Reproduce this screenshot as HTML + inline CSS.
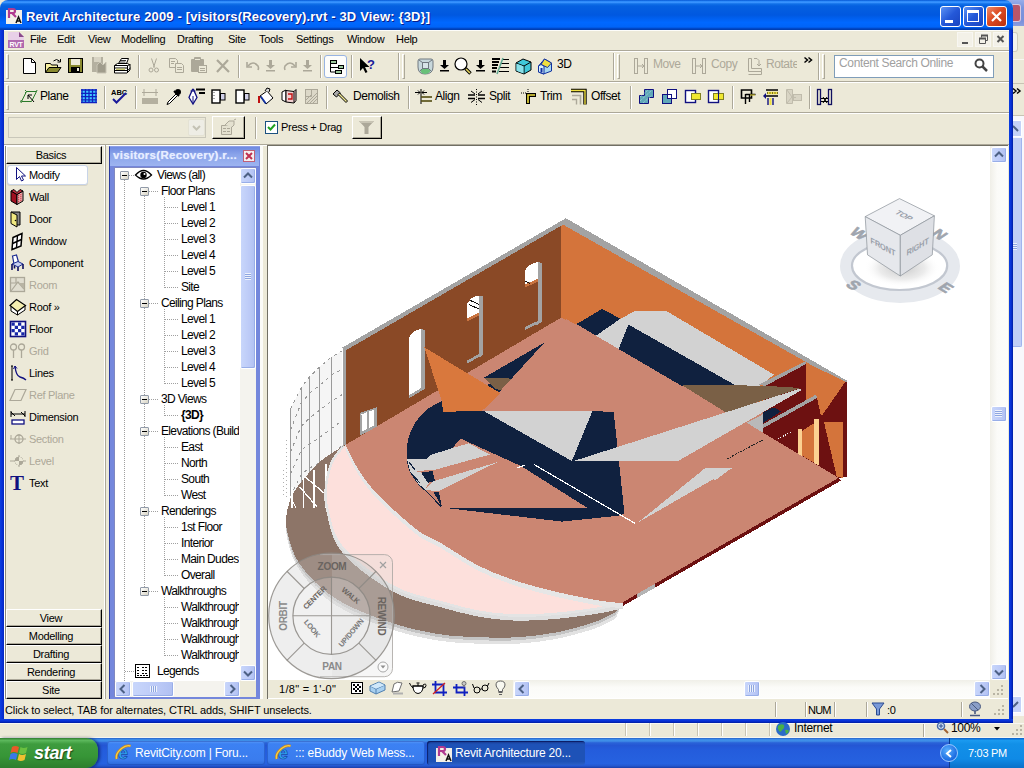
<!DOCTYPE html>
<html><head><meta charset="utf-8"><title>Revit Architecture 2009</title>
<style>
*{box-sizing:border-box;margin:0;padding:0}
html,body{width:1024px;height:768px;overflow:hidden;background:#ece9d8;font-family:"Liberation Sans",sans-serif;font-size:11px;color:#000;letter-spacing:-.3px}
.a{position:absolute}
.t{position:absolute;white-space:nowrap;line-height:13px}
svg{position:absolute;overflow:visible}
#win{left:0;top:0;width:1013px;height:723px;background:#ece9d8;border-radius:8px 8px 0 0}
#title{left:0;top:0;width:1013px;height:30px;border-radius:8px 8px 0 0;background:linear-gradient(#0050d0 0,#2a88f8 4%,#3a94ff 8%,#1070e8 13%,#0560e0 20%,#0058e0 50%,#0060f0 62%,#0068ff 75%,#0064f8 90%,#0048c8 95%,#003aa8 100%)}
#title .tt{left:26px;top:9px;color:#fff;font-weight:bold;font-size:13px;letter-spacing:.16px;text-shadow:1px 1px 0 #0a1e8c;line-height:15px}
#bl{left:0;top:30px;width:4px;height:693px;background:linear-gradient(90deg,#0a3fe0,#0831d9 50%,#0528c0)}
#br{left:1009px;top:30px;width:4px;height:693px;background:linear-gradient(90deg,#0a3fe0,#0831d9 50%,#001ea0)}
#bb{left:0;top:719px;width:1013px;height:4px;background:linear-gradient(#0a3fe0,#0831d9 50%,#001ea0)}
.cap{top:6px;width:21px;height:21px;border:1px solid #fff;border-radius:3px;background:linear-gradient(135deg,#5c93f5,#2458d8 50%,#1a44c0)}
.cap.x{background:linear-gradient(135deg,#ee8a6a,#dc4a22 45%,#b8300e)}
.hl{left:4px;width:1005px;height:2px;border-top:1px solid #aca899;border-bottom:1px solid #fff}
.vs{width:2px;border-left:1px solid #aca899;border-right:1px solid #fff}
.grip{width:3px;border-left:1px solid #fff;border-right:1px solid #aca899;border-top:1px solid #fff;border-bottom:1px solid #aca899}
.g{color:#aca899}
.btn{border:1px solid;border-color:#fff #000 #000 #fff;background:#ece9d8;box-shadow:inset -1px -1px 0 #aca899}
.tl{font-size:12px;letter-spacing:-.45px;line-height:13px}
.dbb{width:96px;height:18px;border:1px solid;border-color:#fff #000 #000 #fff;box-shadow:inset -1px -1px 0 #aca899;text-align:center;line-height:15px;padding-right:6px;padding-top:1px}
.tr{font-size:12px;letter-spacing:-.65px}
.sb{width:16px;height:16px;border:1px solid #fff;border-radius:2px;background:linear-gradient(90deg,#c8d6fb,#bccaf7 60%,#b0c0f2);box-shadow:inset -1px -1px 0 #98aee8}
.tb{top:741px;width:158px;height:24px;border-radius:3px;background:linear-gradient(#5a9af8 0,#3c81f3 12%,#3a7cee 80%,#2a68d8 100%);box-shadow:inset 0 0 0 1px rgba(20,60,160,.4)}
.tb span{position:absolute;left:28px;top:5px;color:#fff;font-size:12px;letter-spacing:-.2px;white-space:nowrap}
.tb.act{background:linear-gradient(#1a3f98 0,#1e52b7 15%,#1e52b7 85%,#2a60c8 100%);box-shadow:inset 1px 1px 1px rgba(0,0,60,.6)}

</style></head><body>
<div class="a" style="left:1005px;top:0;width:19px;height:26px;background:linear-gradient(#98aeea,#7b95de 30%,#7a90da 80%,#8a9ee0)"></div>
<div class="a" style="left:1012px;top:4px;width:9px;height:18px;border-radius:0 3px 3px 0;background:#b8566a;border:1px solid #d8c8e0;border-left:0"></div>
<div class="a" style="left:1013px;top:26px;width:11px;height:712px;background:#ece9d8"></div>
<div class="a" style="left:1013px;top:32px;width:5px;height:20px;border:1px solid #d0ccbc;border-left:0;border-radius:0 3px 3px 0;background:#f4f3ee"></div>
<div class="a" style="left:1013px;top:59px;width:11px;height:1px;background:#f8f7f2"></div>
<div class="a" style="left:1013px;top:83px;width:11px;height:1px;background:#c8c4b4"></div>
<svg style="left:1013px;top:88px" width="8" height="7" fill="none" stroke="#000" stroke-width="1.500"><path d="M0 .5l3 2.500-3 2.500M4 .5l3 2.500-3 2.500"/></svg>
<div class="a" style="left:1013px;top:115px;width:11px;height:1px;background:#c8c4b4"></div>
<div class="a" style="left:1013px;top:116px;width:11px;height:604px;background:#f8f8fc"></div>
<div class="a" style="left:1013px;top:120px;width:9px;height:17px;background:#c4d2f8;border:1px solid #fff;border-left:0;border-radius:0 2px 2px 0"></div>
<svg style="left:1013px;top:124px" width="8" height="10" fill="none" stroke="#4d6185" stroke-width="2"><path d="M0 2l5 5"/></svg>
<div class="a" style="left:1013px;top:138px;width:9px;height:209px;background:#c0cef6;border-right:1px solid #a0b4ee;border-bottom:1px solid #a0b4ee;border-radius:0 0 2px 0"></div>
<div class="a" style="left:1013px;top:243px;width:4px;height:7px;background:repeating-linear-gradient(#eef2fc 0 1px,#8ea6e0 1px 2px)"></div>
<div class="a" style="left:1013px;top:696px;width:9px;height:17px;background:#c4d2f8;border:1px solid #fff;border-left:0;border-radius:0 2px 2px 0"></div>
<svg style="left:1013px;top:700px" width="8" height="10" fill="none" stroke="#4d6185" stroke-width="2"><path d="M0 7l5-5"/></svg>
<div class="a" style="left:1013px;top:716px;width:11px;height:22px;background:#ece9d8"></div>

<div class="a" id="win">
<div class="a" id="title"><span class="t tt">Revit Architecture 2009 - [visitors(Recovery).rvt - 3D View: {3D}]</span>
<svg style="left:6px;top:8px" width="16" height="16" viewBox="0 0 16 16"><rect x="0" y="2" width="16" height="14" fill="#f4f0e8"/><path d="M3 0v10M3 1h4q2 0 2 2t-2 2H3M6 5l4 4" stroke="#b03a90" stroke-width="2.2" fill="none"/><path d="M10 15l2.5-6 2.5 6M11 13h3" stroke="#111" stroke-width="1.5" fill="none"/></svg>
<div class="a cap" style="left:940px"><div class="a" style="left:4px;top:13px;width:8px;height:3px;background:#fff"></div></div>
<div class="a cap" style="left:963px"><div class="a" style="left:3px;top:3px;width:12px;height:12px;border:1px solid #fff;border-top-width:3px"></div></div>
<div class="a cap x" style="left:986px"><svg style="left:0;top:0" width="19" height="19"><path d="M5 5l9 9M14 5l-9 9" stroke="#fff" stroke-width="2.2"/></svg></div>
</div>
<div class="a" id="bl"></div><div class="a" id="br"></div><div class="a" id="bb"></div>

<div class="a" style="left:4px;top:30px;width:1005px;height:1px;background:#fdfdfa"></div>
<svg style="left:8px;top:32px" width="16" height="16" viewBox="0 0 16 16"><path d="M0 0h11l5 5v11H0z" fill="#b06ab0"/><path d="M0 0h11l5 5v3H0z" fill="#e8d0e8"/><path d="M11 0v5h5z" fill="#8a4a8a"/><text x="8" y="14.5" font-size="7" font-weight="bold" fill="#fff" text-anchor="middle" font-family="Liberation Sans,sans-serif">RVT</text></svg>
<span class="t" style="left:30px;top:33px">File</span>
<span class="t" style="left:57px;top:33px">Edit</span>
<span class="t" style="left:88px;top:33px">View</span>
<span class="t" style="left:121px;top:33px">Modelling</span>
<span class="t" style="left:177px;top:33px">Drafting</span>
<span class="t" style="left:228px;top:33px">Site</span>
<span class="t" style="left:259px;top:33px">Tools</span>
<span class="t" style="left:296px;top:33px">Settings</span>
<span class="t" style="left:347px;top:33px">Window</span>
<span class="t" style="left:396px;top:33px">Help</span>
<div class="a" style="left:957px;top:32px;width:16px;height:15px;background:#f3f1e8;border:1px solid #f8f7f2"><div class="a" style="left:4px;top:9px;width:6px;height:2px;background:#555"></div></div>
<div class="a" style="left:975px;top:32px;width:16px;height:15px;background:#f3f1e8;border:1px solid #f8f7f2"><svg style="left:0;top:0" width="14" height="13"><path d="M5.5 4.5v-2h6v5h-2M3.5 5.500h6v5h-6z" fill="none" stroke="#555" stroke-width="1"/><path d="M3 5.500h7M5 2.500h7" stroke="#555" stroke-width="2"/></svg></div>
<div class="a" style="left:993px;top:32px;width:15px;height:15px;background:#f3f1e8;border:1px solid #f8f7f2"><svg style="left:0;top:0" width="13" height="13"><path d="M3.500 3l6 6M9.500 3l-6 6" stroke="#555" stroke-width="2"/></svg></div>
<div class="a hl" style="top:50px"></div>

<!-- toolbar row 1 -->
<div class="a grip" style="left:6px;top:54px;height:25px"></div>
<svg style="left:22px;top:58px" width="16" height="16"><path d="M1.500 .5h8l4 4v11h-12z" fill="#fff" stroke="#000"/><path d="M9.500 .5v4h4" fill="none" stroke="#000"/></svg>
<svg style="left:45px;top:58px" width="17" height="16"><path d="M.5 14.500v-9h5l1 1.500h6v3" fill="#f8f0a0" stroke="#000"/><path d="M.5 14.500l3.500-5h12l-3.500 5z" fill="#8a8a30" stroke="#000"/><path d="M8.500 3q3-3 6 0" fill="none" stroke="#000"/><path d="M15.500 1v3h-3" fill="none" stroke="#000"/></svg>
<svg style="left:68px;top:58px" width="16" height="16"><rect x=".5" y=".5" width="14" height="14" fill="#8a8a30" stroke="#000"/><rect x="3" y="1" width="9" height="6" fill="#ece9d8"/><rect x="3" y="9" width="9" height="5.500" fill="#000"/><rect x="9" y="10" width="2" height="3" fill="#ece9d8"/></svg>
<svg style="left:91px;top:57px" width="17" height="17"><rect x="1" y="0" width="11" height="15" fill="#b4b0a0"/><rect x="3" y="0" width="7" height="5" fill="#d8d4c4"/><path d="M6 8l3-3 3 3 3-3v11H6z" fill="#a09c8c" stroke="#c8c4b4"/></svg>
<svg style="left:113px;top:57px" width="18" height="18"><path d="M5.500 6.500l3-5h7l-2 5z" fill="#fff" stroke="#000"/><path d="M1.500 8.500l3-2h10l2.500 1.500v5l-3 3h-12.500z" fill="#fff" stroke="#000"/><path d="M1.500 8.500h13l3-1M1.500 11h13M1.500 13.500h13l3-2.500M14.500 8.500v7" fill="none" stroke="#000"/><path d="M7 3.500h6M6.500 5h6" stroke="#000" stroke-width=".8"/><rect x="3" y="11.500" width="9" height="1.500" fill="#c8c870"/></svg>
<div class="a vs" style="left:138px;top:55px;height:23px"></div>
<svg style="left:148px;top:58px" width="12" height="16" fill="none" stroke="#aca899"><path d="M3.500 .5l3 9M8.500 .5l-3 9" /><circle cx="3" cy="12" r="2"/><circle cx="8.500" cy="12" r="2"/></svg>
<svg style="left:169px;top:58px" width="16" height="16" fill="none" stroke="#aca899"><path d="M.5 .5h6l2 2v7h-8z"/><path d="M6.500 5.500h6l2 2v7h-8z" fill="#ece9d8"/><path d="M2 3.500h4M2 5.500h3M8 9.500h5M8 11.500h5"/></svg>
<svg style="left:191px;top:57px" width="17" height="17"><rect x="0" y="2" width="13" height="13" rx="1" fill="#aca899"/><rect x="3" y="0" width="7" height="4" rx="1" fill="#aca899"/><rect x="4" y="2" width="5" height="1" fill="#ece9d8"/><rect x="7.500" y="8.500" width="8" height="7" fill="#ece9d8" stroke="#aca899"/><path d="M9 11.500h5M9 13.500h5" stroke="#aca899"/></svg>
<svg style="left:216px;top:59px" width="15" height="14"><path d="M1 1l12 12M12 1l-11 12" stroke="#aca899" stroke-width="2.200"/></svg>
<div class="a vs" style="left:238px;top:55px;height:23px"></div>
<svg style="left:246px;top:61px" width="14" height="10" fill="none" stroke="#aca899" stroke-width="1.600"><path d="M2 5q5-6 10 0 1 2 0 4"/><path d="M1 1v5h5"/></svg>
<svg style="left:266px;top:60px" width="10" height="12" fill="#aca899"><path d="M3 0h3v5h3l-4.500 4-4.500-4h3zM0 10h9v1.500H0z"/></svg>
<svg style="left:283px;top:61px" width="14" height="10" fill="none" stroke="#aca899" stroke-width="1.600"><path d="M12 5q-5-6-10 0-1 2 0 4"/><path d="M13 1v5h-5"/></svg>
<svg style="left:303px;top:60px" width="10" height="12" fill="#aca899"><path d="M3 0h3v5h3l-4.500 4-4.500-4h3zM0 10h9v1.500H0z"/></svg>
<div class="a vs" style="left:320px;top:55px;height:23px"></div>
<div class="a" style="left:324px;top:55px;width:23px;height:23px;background:#fdfdfb;border:1px solid #98b4e2;border-radius:3px"></div>
<svg style="left:328px;top:59px" width="16" height="16" fill="#9cc89c" stroke="#000"><path d="M2.500 3.500v9.500h5M2.500 8.500h8M2.500 3.500h3" fill="none"/><rect x="2.500" y="1.500" width="6" height="3"/><rect x="10.500" y="6.500" width="5" height="3"/><rect x="7.500" y="11.500" width="6" height="3"/></svg>
<div class="a vs" style="left:351px;top:55px;height:23px"></div>
<svg style="left:359px;top:57px" width="18" height="18"><path d="M1 1v13l3-3 2.500 5 2-1-2.500-5h4.500z" fill="#000"/><text x="8" y="12" font-size="13" font-weight="bold" fill="#1a1a9a" font-family="Liberation Sans,sans-serif">?</text></svg>
<div class="a vs" style="left:398px;top:53px;height:27px"></div>
<div class="a grip" style="left:402px;top:54px;height:25px"></div>
<svg style="left:417px;top:58px" width="17" height="17"><path d="M3 1h11q2 0 2 2v6q0 7-8 7-7 0-7-7v-6q0-2 2-2z" fill="#c8d8dc" stroke="#707880"/><path d="M3 12q5-3 11 0-2 4-6 4t-5-4z" fill="#68c078"/><rect x="5.500" y="4.500" width="6" height="6" fill="#d8e4e8" stroke="#707880"/><path d="M2 2l3.500 2.500M15 2l-3.500 2.500M3 13l2.500-2.500M14 13l-2.500-2.500" stroke="#707880"/></svg>
<svg style="left:440px;top:60px" width="10" height="12" fill="#000"><path d="M3 0h3v5h3l-4.500 4-4.500-4h3zM0 10h9v1.500H0z"/></svg>
<svg style="left:454px;top:57px" width="18" height="18"><circle cx="7" cy="7" r="6" fill="#fff" stroke="#000" stroke-width="1.200"/><path d="M11.500 11.500l5 5" stroke="#000" stroke-width="3.400"/><path d="M12 12l4 4" stroke="#e8d860" stroke-width="1.600"/></svg>
<svg style="left:476px;top:60px" width="10" height="12" fill="#000"><path d="M3 0h3v5h3l-4.500 4-4.500-4h3zM0 10h9v1.500H0z"/></svg>
<svg style="left:492px;top:58px" width="17" height="16"><path d="M0 1h8M0 4h7M0 7h6M0 10h5M0 13.500h4" stroke="#000" stroke-width="2"/><path d="M10 1.500h7M9 5.500h8M8 9.500h9M7 13.500h10" stroke="#000" stroke-width="1"/><path d="M11 0l-6 16" stroke="#60a890" stroke-width="1.500"/></svg>
<svg style="left:515px;top:58px" width="17" height="17"><path d="M1 5l7-4 8 3v8l-7 4-8-3z" fill="#40c8d8" stroke="#000"/><path d="M1 5l8 3 7-4M9 8v8" fill="none" stroke="#000"/><path d="M1.500 5.500l7 2.700v7.200l-7-2.700z" fill="#8ae0e8"/></svg>
<svg style="left:537px;top:57px" width="17" height="18"><path d="M1.500 9l6-7 7 4v8l-8 3-5-2z" fill="#a8d8f0" stroke="#1030a0"/><path d="M7.500 2l7 4-4 4.500-6.500-3z" fill="#f0e040" stroke="#1030a0"/><path d="M1.500 9l2.500-1.500 3 1.500v8l-5.500-2z" fill="#d8f0f8" stroke="#1030a0"/><rect x="3.500" y="11" width="2" height="4.500" fill="#1030a0"/></svg>
<span class="t tl" style="left:557px;top:58px">3D</span>
<div class="a vs" style="left:613px;top:53px;height:27px"></div>
<div class="a grip" style="left:617px;top:54px;height:25px"></div>
<svg style="left:634px;top:58px" width="15" height="16" fill="none" stroke="#aca899"><rect x=".5" y=".5" width="3" height="15"/><rect x="10.500" y=".5" width="3" height="15"/><path d="M4 8h6M8 6l2 2-2 2"/></svg>
<span class="t g tl" style="left:653px;top:58px">Move</span>
<svg style="left:692px;top:58px" width="15" height="16" fill="none" stroke="#aca899"><rect x=".5" y=".5" width="3" height="15"/><rect x="10.500" y=".5" width="3" height="15"/><path d="M4 8h6M8 6l2 2-2 2"/></svg>
<span class="t g tl" style="left:711px;top:58px">Copy</span>
<svg style="left:747px;top:58px" width="16" height="17" fill="none" stroke="#aca899"><path d="M1.500 .5v13h13v3h-13M1.500 .5h3v10h10v3"/><path d="M7 .5h3l2 2v5M10 6l2 2 2-2"/></svg>
<span class="t g tl" style="left:766px;top:58px;width:31px;overflow:hidden">Rotate</span>
<svg style="left:804px;top:57px" width="9" height="7" fill="none" stroke="#000" stroke-width="1.500"><path d="M.5 .5l3 2.500-3 2.500M4.500 .5l3 2.500-3 2.500"/></svg>
<div class="a vs" style="left:818px;top:53px;height:27px"></div>
<div class="a grip" style="left:822px;top:54px;height:25px"></div>
<div class="a" style="left:834px;top:55px;width:160px;height:23px;background:#fff;border:1px solid #7f9db9"></div>
<span class="t" style="left:839px;top:57px;color:#a0a0a0;font-size:12px;letter-spacing:-.35px">Content Search Online</span>
<svg style="left:974px;top:58px" width="15" height="15"><circle cx="5.500" cy="5.500" r="4" fill="#fff" stroke="#444" stroke-width="2"/><path d="M8.500 8.500l4.500 4.500" stroke="#444" stroke-width="2.500"/></svg>
<div class="a hl" style="top:81px"></div>

<!-- toolbar row 2 -->
<div class="a grip" style="left:6px;top:85px;height:25px"></div>
<svg style="left:21px;top:89px" width="16" height="14" fill="none"><path d="M5.500 2.500h10l-5 10h-10z" stroke="#2a7a2a"/><path d="M13 13l-6-7M7 10v-4h4" stroke="#000"/><path d="M4 1l1.500 1.500L4 4M.5 11l-1 1.500 1 1.500M16 1l-.5 1.500" stroke="#2a7a2a"/></svg>
<span class="t tl" style="left:40px;top:90px">Plane</span>
<svg style="left:81px;top:89px" width="16" height="14"><rect width="15" height="13" x=".5" y=".5" fill="#40c8ff"/><path d="M0 1h16M0 4.300h16M0 7.600h16M0 10.900h16M0 13.500h16M1 0v14M4.500 0v14M8 0v14M11.500 0v14M15 0v14" stroke="#1020c0" stroke-width="1.300"/></svg>
<div class="a vs" style="left:104px;top:86px;height:23px"></div>
<svg style="left:111px;top:88px" width="17" height="17"><text x="0" y="6.500" font-size="7.500" font-weight="bold" font-family="Liberation Sans,sans-serif" fill="#000" letter-spacing="0">ABC</text><path d="M2 11l3.500 3.500L15 5" fill="none" stroke="#1a1a9a" stroke-width="2"/></svg>
<div class="a vs" style="left:135px;top:86px;height:23px"></div>
<svg style="left:142px;top:89px" width="17" height="16"><rect x="0" y="9" width="16" height="6" fill="#b4b0a0"/><path d="M2 0v7M14 0v7M0 3.500h16" stroke="#aca899"/></svg>
<svg style="left:166px;top:88px" width="16" height="17"><circle cx="12" cy="4" r="3" fill="#000"/><path d="M10 6l-8 8-1 2.500 2.500-1 8-8z" fill="#fff" stroke="#000"/><path d="M8 3l5 5" stroke="#000" stroke-width="2"/></svg>
<svg style="left:188px;top:88px" width="17" height="17"><path d="M4.500 1.500l-3.500 8 4 6.500 4-6.500-3.500-8z" fill="#fff" stroke="#101080" stroke-width="1.300"/><path d="M5 8v7" stroke="#101080"/><path d="M2.500 3h5" stroke="#101080"/><path d="M8 1.500h9M11 5h6" stroke="#000" stroke-width="2.200"/></svg>
<svg style="left:211px;top:89px" width="16" height="16"><rect x="1" y="1" width="8" height="13" fill="#fff" stroke="#000" stroke-width="1.400"/><rect x="9.500" y="4.500" width="4.500" height="6.500" fill="#d0d0e8" stroke="#000"/><path d="M3 3v9" stroke="#555" stroke-dasharray="1 2"/></svg>
<svg style="left:235px;top:89px" width="16" height="16"><rect x="1" y="1" width="8" height="13" fill="#fff" stroke="#000" stroke-width="1.400"/><rect x="9.500" y="4.500" width="4.500" height="6.500" fill="#d0d0e8" stroke="#000"/></svg>
<svg style="left:257px;top:88px" width="17" height="17"><path d="M2 8v7" stroke="#c01010" stroke-width="2"/><path d="M3 8l7-5 6 7-7 6z" fill="#fff" stroke="#000"/><path d="M3 9l5 7 1.500-1-5-7z" fill="#1030a0"/><path d="M8 3l2-3 3 1-1 3" fill="#d8d8d8" stroke="#000"/></svg>
<svg style="left:281px;top:88px" width="17" height="17"><path d="M1 4l4-2v12l-4-2z" fill="#fff" stroke="#000"/><path d="M5 2.500l8 1 2-2v11l-2 2.500-8-1z" fill="#f0d0d0" stroke="#000"/><path d="M13 3.500v11" stroke="#000"/><path d="M7 6h4v5H7" fill="none" stroke="#c01010" stroke-width="1.400"/></svg>
<svg style="left:305px;top:89px" width="14" height="16"><rect x=".5" y=".5" width="12" height="14" fill="#dcd8c8" stroke="#aca899"/><path d="M6.500 .5v7h-6" fill="none" stroke="#aca899"/><path d="M2 14l10-10M5 14l7-7M8 14l4-4M1 11l5-5" stroke="#aca899"/></svg>
<div class="a vs" style="left:326px;top:86px;height:23px"></div>
<svg style="left:332px;top:89px" width="17" height="16"><path d="M1 5l4-4 3.500 3-4 4z" fill="#a8a8a8" stroke="#000"/><path d="M6 5.500l8 8 1.500-1.500-8-8z" fill="#f0e890" stroke="#000"/></svg>
<span class="t tl" style="left:353px;top:90px">Demolish</span>
<div class="a vs" style="left:408px;top:86px;height:23px"></div>
<svg style="left:415px;top:89px" width="18" height="16" fill="none" stroke="#000"><path d="M0 3.500h5M3 1.500l2 2-2 2M12 3.500H7M9 1.500l-2 2 2 2M6 0v15"/><path d="M6 8h11M6 12h11" stroke-width="1.600"/><path d="M6 8h11M6 12h11" stroke="#f0e040" stroke-width=".6"/></svg>
<span class="t tl" style="left:435px;top:90px">Align</span>
<svg style="left:468px;top:89px" width="17" height="16" fill="none" stroke="#000"><path d="M0 6h7M0 9.500h7M10 6h7M10 9.500h7" stroke-width="1.500"/><path d="M8.500 0v16" stroke-dasharray="1 1.500"/><path d="M3 2l4 3M3 13.500l4-3M14 2l-4 3M14 13.500l-4-3"/></svg>
<span class="t tl" style="left:489px;top:90px">Split</span>
<svg style="left:520px;top:89px" width="17" height="16" fill="none"><path d="M1 4h6M8 0v6" stroke="#000" stroke-dasharray="1 1"/><path d="M8 15V6h8" stroke="#000" stroke-width="4"/><path d="M8 14V6h7" stroke="#f0e040" stroke-width="1.600"/></svg>
<span class="t tl" style="left:540px;top:90px">Trim</span>
<svg style="left:571px;top:89px" width="17" height="16" fill="none"><path d="M0 1.500h14v14" stroke="#000" stroke-width="3.400"/><path d="M0 1.500h14v14" stroke="#f0e040" stroke-width="1.400"/><path d="M1 6.500h8.500v9" stroke="#aca899" stroke-width="1.600"/><path d="M1 10.500h4.500v5" stroke="#aca899" stroke-width="1.400"/></svg>
<span class="t tl" style="left:591px;top:90px">Offset</span>
<div class="a vs" style="left:630px;top:86px;height:23px"></div>
<svg style="left:638px;top:89px" width="17" height="16"><path d="M6.500 .5h9v8h-5v6h-9v-8h5z" fill="#60a8b8" stroke="#101080"/><path d="M2 8l8-7M2 12l12-11M5 14l9-8" stroke="#a8d8e0" stroke-dasharray="1 1"/></svg>
<svg style="left:661px;top:89px" width="17" height="16"><rect x="6.500" y=".5" width="9" height="9" fill="#fff" stroke="#101080"/><rect x="1.500" y="5.500" width="9" height="9" fill="#60a8b8" stroke="#101080"/><rect x="6.500" y="5.500" width="4" height="4" fill="#fff" stroke="#101080"/></svg>
<svg style="left:685px;top:89px" width="17" height="16"><rect x=".5" y="1.500" width="10" height="12" fill="#fff" stroke="#101080" stroke-width="1.400"/><rect x="6.500" y="4.500" width="9" height="6" fill="#f0e830" stroke="#808020"/></svg>
<svg style="left:708px;top:89px" width="17" height="16"><rect x=".5" y="1.500" width="10" height="12" fill="#fff" stroke="#101080" stroke-width="1.400"/><rect x="5.500" y="4.500" width="10" height="6" fill="#f0e830" stroke="#808020"/><path d="M10.500 4v7" stroke="#101080"/></svg>
<div class="a vs" style="left:732px;top:86px;height:23px"></div>
<svg style="left:741px;top:89px" width="16" height="16" fill="none" stroke="#000"><path d="M.5 1h10v8h-10z" stroke-width="1.600"/><path d="M4.500 5v10M4.500 5.500h10M8.500 5v8" stroke-width="1.400"/><path d="M9 6h5" stroke="#f0e040"/></svg>
<svg style="left:763px;top:89px" width="17" height="17" fill="none"><path d="M3 1h12M3 7h12" stroke="#000" stroke-width="1.600"/><path d="M4 4h11" stroke="#f0e040" stroke-width="2.500"/><path d="M4 4h11" stroke="#000" stroke-dasharray="1 1.500"/><path d="M0 7l3-3v6z" fill="#101080"/><path d="M5 9v7M10 9v7" stroke="#101080" stroke-width="1.400"/><path d="M7.500 9v7" stroke="#f0e040" stroke-width="2"/></svg>
<svg style="left:786px;top:89px" width="17" height="16" fill="none" stroke="#c0bcac"><path d="M.5 .5h6v14h-6z" fill="#d8d4c4"/><path d="M1 1l5 7-5 6"/><rect x="7.500" y="5.500" width="8" height="6" fill="#d8d4c4"/><path d="M6 8.500h4M8 7l-2 1.500 2 1.500"/></svg>
<div class="a vs" style="left:809px;top:86px;height:23px"></div>
<svg style="left:817px;top:89px" width="16" height="16" fill="none" stroke="#101060"><rect x=".5" y=".5" width="3" height="15" stroke-width="1.300"/><rect x="11.500" y=".5" width="3" height="15" stroke-width="1.300"/><path d="M4 9.500h7M4 12.500h7" stroke="#000"/><path d="M6 8l4 6M10 8l-4 6" stroke="#000"/></svg>
<div class="a hl" style="top:112px"></div>
<!-- options bar -->
<div class="a" style="left:8px;top:117px;width:198px;height:21px;border:1px solid #c9c7ba;background:#ece9d8"></div>
<div class="a" style="left:188px;top:119px;width:17px;height:17px;border:1px solid #e4e2d4;border-radius:2px;background:#eeede5"></div>
<svg style="left:192px;top:125px" width="9" height="6" fill="none" stroke="#c4c2b4" stroke-width="2"><path d="M1 1l3.500 3.500L8 1"/></svg>
<div class="a btn" style="left:212px;top:116px;width:33px;height:23px"></div>
<svg style="left:220px;top:119px" width="18" height="17" fill="none" stroke="#aca899"><path d="M1.500 6.500h10v9h-10z" fill="#e4e1d0"/><path d="M3 9.500h3M7 9.500h3M3 12.500h3M7 12.500h3"/><path d="M5 6l4-4h5v4l-2 2" fill="#e4e1d0"/><path d="M14 1l2-1"/></svg>
<div class="a vs" style="left:255px;top:117px;height:22px"></div>
<div class="a" style="left:265px;top:121px;width:13px;height:13px;background:#fff;border:1px solid #1c5180"></div>
<svg style="left:267px;top:123px" width="9" height="9" fill="none" stroke="#21a121" stroke-width="2"><path d="M1 4l2.500 2.500L8 1.500"/></svg>
<span class="t" style="left:281px;top:121px">Press + Drag</span>
<div class="a btn" style="left:352px;top:116px;width:30px;height:23px"></div>
<svg style="left:358px;top:120px" width="17" height="15"><path d="M1 1h15l-5.500 6v7h-4v-7z" fill="#aca899"/><path d="M1 1h15l-1.500 2h-12z" fill="#c8c4b4"/></svg>

<div class="a" style="left:4px;top:144px;width:1005px;height:1px;background:#aca899"></div>
<div class="a" style="left:4px;top:145px;width:263px;height:1px;background:#fff"></div>
<div class="a" style="left:4px;top:146px;width:1px;height:553px;background:#fff"></div>
<div class="a" style="left:5px;top:146px;width:1px;height:553px;background:#8a887c"></div>
<div class="a dbb" style="left:6px;top:146px"><span>Basics</span></div>
<div class="a dbb" style="left:6px;top:609px"><span>View</span></div>
<div class="a dbb" style="left:6px;top:627px"><span>Modelling</span></div>
<div class="a dbb" style="left:6px;top:645px"><span>Drafting</span></div>
<div class="a dbb" style="left:6px;top:663px"><span>Rendering</span></div>
<div class="a dbb" style="left:6px;top:681px"><span>Site</span></div>
<div class="a" style="left:7px;top:165px;width:81px;height:20px;background:#fff;border:1px solid #c8d4e8;border-radius:3px;box-shadow:0 1px 0 #d8d4c4"></div>
<svg style="left:15px;top:167px" width="16" height="16"><path d="M1.500 .5v12l3-3 2 4.500 2-1-2-4h4z" fill="#fff" stroke="#101080"/></svg>
<span class="t" style="left:29px;top:169px">Modify</span>
<svg style="left:10px;top:189px" width="16" height="16"><path d="M1 2l6 3.500v10L1 12z" fill="#a01020" stroke="#000"/><path d="M7 5.500l6-3.500v10l-6 3.500z" fill="#f0b0b0" stroke="#000"/><path d="M1 2l3-1.500 3 3 3-3 3 1.500-6 3.500z" fill="#c83040" stroke="#000"/><path d="M8 7l4-2M8 9l4-2M8 11l4-2M8 13l4-2" stroke="#c01020" stroke-dasharray="1 1"/></svg>
<span class="t" style="left:29px;top:191px">Wall</span>
<svg style="left:10px;top:211px" width="16" height="16"><path d="M1 1h9v13h-3" fill="#888" stroke="#000"/><path d="M1 1l6 3v12l-6-3.500z" fill="#f0e880" stroke="#000"/><circle cx="5.500" cy="9.500" r=".8"/></svg>
<span class="t" style="left:29px;top:213px">Door</span>
<svg style="left:10px;top:233px" width="16" height="16"><path d="M3 4.500l9-4-1 12.500-9 3.500z" fill="#fff" stroke="#000" stroke-width="1.500"/><path d="M7.500 2.500l-1 12M2.500 10.500l9-4" stroke="#000" stroke-width="1.400" fill="none"/></svg>
<span class="t" style="left:29px;top:235px">Window</span>
<svg style="left:10px;top:255px" width="16" height="16"><path d="M2.500 1l4-1 2 7-4.500 2z" fill="#fff" stroke="#1a2a90" stroke-width="1.200"/><path d="M2 9l6-2.500 5 2.500-5 3z" fill="#c8d0f0" stroke="#1a2a90"/><path d="M2 9v6M8 12v4M13 9v5M4.500 10.500v3" stroke="#101060" stroke-width="1.600" fill="none"/></svg>
<span class="t" style="left:29px;top:257px">Component</span>
<svg style="left:10px;top:277px" width="16" height="16"><rect x=".5" y=".5" width="14" height="14" fill="#e0ddd0" stroke="#aca899" stroke-width="1.300"/><path d="M1 14l7-9 6 7M1 6h5v-5" stroke="#aca899" stroke-width="1.200" fill="none"/><path d="M8 6l6 6v-6z" fill="#b8b4a4"/></svg>
<span class="t g" style="left:29px;top:279px">Room</span>
<svg style="left:10px;top:299px" width="16" height="16"><path d="M1 7.500v4.500l6.500 4 7.500-5v-4" fill="#fff" stroke="#000"/><path d="M7.500 12v4" stroke="#000"/><path d="M0 6.500l6.500-6 9 6-8 6z" fill="#f4eeb0" stroke="#000" stroke-width="1.200"/></svg>
<span class="t" style="left:29px;top:301px">Roof »</span>
<svg style="left:10px;top:321px" width="16" height="16"><rect x=".5" y=".5" width="15" height="15" fill="#fff" stroke="#101080" stroke-width="1.600"/><path d="M1.50 1.50h3.250v3.250h-3.250zM8.00 1.50h3.250v3.250h-3.250zM4.75 4.75h3.250v3.250h-3.250zM11.25 4.75h3.250v3.250h-3.250zM1.50 8.00h3.250v3.250h-3.250zM8.00 8.00h3.250v3.250h-3.250zM4.75 11.25h3.250v3.250h-3.250zM11.25 11.25h3.250v3.250h-3.250z" fill="#1828a8"/></svg>
<span class="t" style="left:29px;top:323px">Floor</span>
<svg style="left:10px;top:343px" width="16" height="16"><circle cx="3.500" cy="4" r="3" fill="none" stroke="#aca899" stroke-width="1.300"/><circle cx="11.500" cy="4" r="3" fill="none" stroke="#aca899" stroke-width="1.300"/><path d="M3.500 7v8M11.500 7v8" stroke="#aca899" stroke-width="1.300"/></svg>
<span class="t g" style="left:29px;top:345px">Grid</span>
<svg style="left:10px;top:365px" width="16" height="16"><path d="M2 1v14M1 1h2M1 15h2" stroke="#000" fill="none"/><path d="M5 1q1 10 5 11t6 3" stroke="#101080" stroke-width="1.300" fill="none"/><path d="M5 1l-1.500 3M5 1l2 2.500" stroke="#101080" fill="none"/></svg>
<span class="t" style="left:29px;top:367px">Lines</span>
<svg style="left:10px;top:387px" width="16" height="16"><path d="M5 2.500h11l-5 11h-11z" fill="none" stroke="#aca899" stroke-width="1.200"/></svg>
<span class="t g" style="left:29px;top:389px">Ref Plane</span>
<svg style="left:10px;top:409px" width="16" height="16"><path d="M1 2v6M15 2v6M1 5h14M1 3l4 4M11 3l4 4" stroke="#000" fill="none"/><rect x="2" y="11" width="12" height="4" fill="#fff" stroke="#101080" stroke-width="1.300"/></svg>
<span class="t" style="left:29px;top:411px">Dimension</span>
<svg style="left:10px;top:431px" width="16" height="16"><circle cx="9" cy="8" r="4" fill="none" stroke="#aca899" stroke-width="1.300"/><path d="M0 8h16M9 3v10M1 4v4" stroke="#aca899" fill="none"/></svg>
<span class="t g" style="left:29px;top:433px">Section</span>
<svg style="left:10px;top:453px" width="16" height="16"><circle cx="9" cy="8" r="4" fill="#aca899" stroke="#aca899"/><path d="M0 8h16M9 2v12" stroke="#aca899"/><path d="M9 8h4a4 4 0 0 0-4-4zM9 8h-4a4 4 0 0 0 4 4z" fill="#ece9d8"/></svg>
<span class="t g" style="left:29px;top:455px">Level</span>
<svg style="left:10px;top:475px" width="16" height="16"><text x="0" y="15" font-family="Liberation Serif,serif" font-size="21" font-weight="bold" fill="#101080">T</text></svg>
<span class="t" style="left:29px;top:477px">Text</span>
<div class="a" style="left:104px;top:145px;width:2px;height:554px;border-left:1px solid #fff;border-right:1px solid #aca899"></div>
<div class="a" style="left:109px;top:146px;width:151px;height:553px;background:#7487dc;border-left:1px solid #2a3aa0;border-top:1px solid #8ea0ea"></div>
<div class="a" style="left:110px;top:147px;width:149px;height:19px;background:linear-gradient(#6f8ae0,#8aa4ea 40%,#9db4f0)"></div>
<span class="t" style="left:113px;top:149px;color:#e8eeff;font-weight:bold;font-size:11.500px;letter-spacing:.3px;text-shadow:0 0 1px #c8d8ff">visitors(Recovery).r...</span>
<div class="a" style="left:243px;top:150px;width:12px;height:12px;background:#f4f0f0;border:1px solid #c06078"></div><svg style="left:243px;top:150px" width="12" height="12"><path d="M3 3l6 6M9 3l-6 6" stroke="#c03050" stroke-width="2"/></svg>
<div class="a" style="left:114px;top:167px;width:142px;height:530px;background:#fff;border:1px solid #8088c0;border-right:0"></div>
<div class="a" style="left:115px;top:168px;width:124px;height:513px;overflow:hidden">
<div class="a" style="left:9px;top:12px;width:1px;height:510px;background:repeating-linear-gradient(#a0a0a0 0 1px,transparent 1px 2px)"></div>
<div class="a" style="left:29px;top:28px;width:1px;height:396px;background:repeating-linear-gradient(#a0a0a0 0 1px,transparent 1px 2px)"></div>
<div class="a" style="left:5px;top:3px;width:9px;height:9px;border:1px solid #919aa8;background:linear-gradient(135deg,#fff,#d8d4c4);border-radius:1px"><div class="a" style="left:1px;top:3px;width:5px;height:1px;background:#000"></div></div>
<div class="a" style="left:14px;top:7px;width:5px;height:1px;background:repeating-linear-gradient(90deg,#a0a0a0 0 1px,transparent 1px 2px)"></div>
<svg style="left:20px;top:2px" width="17" height="10"><path d="M.5 5q8-9 16 0-8 8-16 0z" fill="#fff" stroke="#000" stroke-width="1.300"/><circle cx="8.500" cy="5" r="3.200" fill="#000"/><circle cx="9.500" cy="4" r="1" fill="#fff"/></svg>
<span class="t tr" style="left:42px;top:1px;">Views (all)</span>
<div class="a" style="left:25px;top:19px;width:9px;height:9px;border:1px solid #919aa8;background:linear-gradient(135deg,#fff,#d8d4c4);border-radius:1px"><div class="a" style="left:1px;top:3px;width:5px;height:1px;background:#000"></div></div>
<div class="a" style="left:34px;top:23px;width:9px;height:1px;background:repeating-linear-gradient(90deg,#a0a0a0 0 1px,transparent 1px 2px)"></div>
<span class="t tr" style="left:46px;top:17px;">Floor Plans</span>
<div class="a" style="left:50px;top:39px;width:13px;height:1px;background:repeating-linear-gradient(90deg,#a0a0a0 0 1px,transparent 1px 2px)"></div>
<span class="t tr" style="left:66px;top:33px;">Level 1</span>
<div class="a" style="left:50px;top:55px;width:13px;height:1px;background:repeating-linear-gradient(90deg,#a0a0a0 0 1px,transparent 1px 2px)"></div>
<span class="t tr" style="left:66px;top:49px;">Level 2</span>
<div class="a" style="left:50px;top:71px;width:13px;height:1px;background:repeating-linear-gradient(90deg,#a0a0a0 0 1px,transparent 1px 2px)"></div>
<span class="t tr" style="left:66px;top:65px;">Level 3</span>
<div class="a" style="left:50px;top:87px;width:13px;height:1px;background:repeating-linear-gradient(90deg,#a0a0a0 0 1px,transparent 1px 2px)"></div>
<span class="t tr" style="left:66px;top:81px;">Level 4</span>
<div class="a" style="left:50px;top:103px;width:13px;height:1px;background:repeating-linear-gradient(90deg,#a0a0a0 0 1px,transparent 1px 2px)"></div>
<span class="t tr" style="left:66px;top:97px;">Level 5</span>
<div class="a" style="left:50px;top:119px;width:13px;height:1px;background:repeating-linear-gradient(90deg,#a0a0a0 0 1px,transparent 1px 2px)"></div>
<span class="t tr" style="left:66px;top:113px;">Site</span>
<div class="a" style="left:25px;top:131px;width:9px;height:9px;border:1px solid #919aa8;background:linear-gradient(135deg,#fff,#d8d4c4);border-radius:1px"><div class="a" style="left:1px;top:3px;width:5px;height:1px;background:#000"></div></div>
<div class="a" style="left:34px;top:135px;width:9px;height:1px;background:repeating-linear-gradient(90deg,#a0a0a0 0 1px,transparent 1px 2px)"></div>
<span class="t tr" style="left:46px;top:129px;">Ceiling Plans</span>
<div class="a" style="left:50px;top:151px;width:13px;height:1px;background:repeating-linear-gradient(90deg,#a0a0a0 0 1px,transparent 1px 2px)"></div>
<span class="t tr" style="left:66px;top:145px;">Level 1</span>
<div class="a" style="left:50px;top:167px;width:13px;height:1px;background:repeating-linear-gradient(90deg,#a0a0a0 0 1px,transparent 1px 2px)"></div>
<span class="t tr" style="left:66px;top:161px;">Level 2</span>
<div class="a" style="left:50px;top:183px;width:13px;height:1px;background:repeating-linear-gradient(90deg,#a0a0a0 0 1px,transparent 1px 2px)"></div>
<span class="t tr" style="left:66px;top:177px;">Level 3</span>
<div class="a" style="left:50px;top:199px;width:13px;height:1px;background:repeating-linear-gradient(90deg,#a0a0a0 0 1px,transparent 1px 2px)"></div>
<span class="t tr" style="left:66px;top:193px;">Level 4</span>
<div class="a" style="left:50px;top:215px;width:13px;height:1px;background:repeating-linear-gradient(90deg,#a0a0a0 0 1px,transparent 1px 2px)"></div>
<span class="t tr" style="left:66px;top:209px;">Level 5</span>
<div class="a" style="left:25px;top:227px;width:9px;height:9px;border:1px solid #919aa8;background:linear-gradient(135deg,#fff,#d8d4c4);border-radius:1px"><div class="a" style="left:1px;top:3px;width:5px;height:1px;background:#000"></div></div>
<div class="a" style="left:34px;top:231px;width:9px;height:1px;background:repeating-linear-gradient(90deg,#a0a0a0 0 1px,transparent 1px 2px)"></div>
<span class="t tr" style="left:46px;top:225px;">3D Views</span>
<div class="a" style="left:50px;top:247px;width:13px;height:1px;background:repeating-linear-gradient(90deg,#a0a0a0 0 1px,transparent 1px 2px)"></div>
<span class="t tr" style="left:66px;top:241px;font-weight:bold;">{3D}</span>
<div class="a" style="left:25px;top:259px;width:9px;height:9px;border:1px solid #919aa8;background:linear-gradient(135deg,#fff,#d8d4c4);border-radius:1px"><div class="a" style="left:1px;top:3px;width:5px;height:1px;background:#000"></div></div>
<div class="a" style="left:34px;top:263px;width:9px;height:1px;background:repeating-linear-gradient(90deg,#a0a0a0 0 1px,transparent 1px 2px)"></div>
<span class="t tr" style="left:46px;top:257px;">Elevations (Building Elevation)</span>
<div class="a" style="left:50px;top:279px;width:13px;height:1px;background:repeating-linear-gradient(90deg,#a0a0a0 0 1px,transparent 1px 2px)"></div>
<span class="t tr" style="left:66px;top:273px;">East</span>
<div class="a" style="left:50px;top:295px;width:13px;height:1px;background:repeating-linear-gradient(90deg,#a0a0a0 0 1px,transparent 1px 2px)"></div>
<span class="t tr" style="left:66px;top:289px;">North</span>
<div class="a" style="left:50px;top:311px;width:13px;height:1px;background:repeating-linear-gradient(90deg,#a0a0a0 0 1px,transparent 1px 2px)"></div>
<span class="t tr" style="left:66px;top:305px;">South</span>
<div class="a" style="left:50px;top:327px;width:13px;height:1px;background:repeating-linear-gradient(90deg,#a0a0a0 0 1px,transparent 1px 2px)"></div>
<span class="t tr" style="left:66px;top:321px;">West</span>
<div class="a" style="left:25px;top:339px;width:9px;height:9px;border:1px solid #919aa8;background:linear-gradient(135deg,#fff,#d8d4c4);border-radius:1px"><div class="a" style="left:1px;top:3px;width:5px;height:1px;background:#000"></div></div>
<div class="a" style="left:34px;top:343px;width:9px;height:1px;background:repeating-linear-gradient(90deg,#a0a0a0 0 1px,transparent 1px 2px)"></div>
<span class="t tr" style="left:46px;top:337px;">Renderings</span>
<div class="a" style="left:50px;top:359px;width:13px;height:1px;background:repeating-linear-gradient(90deg,#a0a0a0 0 1px,transparent 1px 2px)"></div>
<span class="t tr" style="left:66px;top:353px;">1st Floor</span>
<div class="a" style="left:50px;top:375px;width:13px;height:1px;background:repeating-linear-gradient(90deg,#a0a0a0 0 1px,transparent 1px 2px)"></div>
<span class="t tr" style="left:66px;top:369px;">Interior</span>
<div class="a" style="left:50px;top:391px;width:13px;height:1px;background:repeating-linear-gradient(90deg,#a0a0a0 0 1px,transparent 1px 2px)"></div>
<span class="t tr" style="left:66px;top:385px;">Main Dudes</span>
<div class="a" style="left:50px;top:407px;width:13px;height:1px;background:repeating-linear-gradient(90deg,#a0a0a0 0 1px,transparent 1px 2px)"></div>
<span class="t tr" style="left:66px;top:401px;">Overall</span>
<div class="a" style="left:25px;top:419px;width:9px;height:9px;border:1px solid #919aa8;background:linear-gradient(135deg,#fff,#d8d4c4);border-radius:1px"><div class="a" style="left:1px;top:3px;width:5px;height:1px;background:#000"></div></div>
<div class="a" style="left:34px;top:423px;width:9px;height:1px;background:repeating-linear-gradient(90deg,#a0a0a0 0 1px,transparent 1px 2px)"></div>
<span class="t tr" style="left:46px;top:417px;">Walkthroughs</span>
<div class="a" style="left:50px;top:439px;width:13px;height:1px;background:repeating-linear-gradient(90deg,#a0a0a0 0 1px,transparent 1px 2px)"></div>
<span class="t tr" style="left:66px;top:433px;">Walkthrough 1</span>
<div class="a" style="left:50px;top:455px;width:13px;height:1px;background:repeating-linear-gradient(90deg,#a0a0a0 0 1px,transparent 1px 2px)"></div>
<span class="t tr" style="left:66px;top:449px;">Walkthrough 2</span>
<div class="a" style="left:50px;top:471px;width:13px;height:1px;background:repeating-linear-gradient(90deg,#a0a0a0 0 1px,transparent 1px 2px)"></div>
<span class="t tr" style="left:66px;top:465px;">Walkthrough 3</span>
<div class="a" style="left:50px;top:487px;width:13px;height:1px;background:repeating-linear-gradient(90deg,#a0a0a0 0 1px,transparent 1px 2px)"></div>
<span class="t tr" style="left:66px;top:481px;">Walkthrough 4</span>
<div class="a" style="left:10px;top:503px;width:9px;height:1px;background:repeating-linear-gradient(90deg,#a0a0a0 0 1px,transparent 1px 2px)"></div>
<svg style="left:20px;top:496px" width="15" height="14"><rect x=".5" y=".5" width="14" height="13" fill="#fff" stroke="#000"/><path d="M2 3.500h3M2 6.500h3M2 9.500h3M7 3.500h6M7 6.500h6M7 9.500h6M2 11.500h11" stroke="#000" stroke-dasharray="2 1"/></svg>
<span class="t tr" style="left:42px;top:497px;">Legends</span>
<div class="a" style="left:49px;top:29px;width:1px;height:91px;background:repeating-linear-gradient(#a0a0a0 0 1px,transparent 1px 2px)"></div>
<div class="a" style="left:49px;top:141px;width:1px;height:75px;background:repeating-linear-gradient(#a0a0a0 0 1px,transparent 1px 2px)"></div>
<div class="a" style="left:49px;top:237px;width:1px;height:11px;background:repeating-linear-gradient(#a0a0a0 0 1px,transparent 1px 2px)"></div>
<div class="a" style="left:49px;top:269px;width:1px;height:59px;background:repeating-linear-gradient(#a0a0a0 0 1px,transparent 1px 2px)"></div>
<div class="a" style="left:49px;top:349px;width:1px;height:59px;background:repeating-linear-gradient(#a0a0a0 0 1px,transparent 1px 2px)"></div>
<div class="a" style="left:49px;top:429px;width:1px;height:59px;background:repeating-linear-gradient(#a0a0a0 0 1px,transparent 1px 2px)"></div>
</div>
<div class="a" style="left:240px;top:168px;width:16px;height:513px;background:#f4f3ee"></div>
<div class="a sb" style="left:240px;top:168px"><svg width="16" height="16" style="left:-1px;top:-1px"><path d="M4 9.500l4-4 4 4" fill="none" stroke="#4d6185" stroke-width="2"/></svg></div>
<div class="a sb" style="left:240px;top:665px"><svg width="16" height="16" style="left:-1px;top:-1px"><path d="M4 6.500l4 4 4-4" fill="none" stroke="#4d6185" stroke-width="2"/></svg></div>
<div class="a sb" style="left:240px;top:185px;height:184px"></div>
<div class="a" style="left:245px;top:273px;width:6px;height:7px;background:repeating-linear-gradient(#eef2fc 0 1px,#8ea6e0 1px 2px)"></div>
<div class="a" style="left:115px;top:681px;width:125px;height:16px;background:#f4f3ee"></div>
<div class="a sb" style="left:115px;top:681px"><svg width="16" height="16" style="left:-1px;top:-1px"><path d="M9.500 4l-4 4 4 4" fill="none" stroke="#4d6185" stroke-width="2"/></svg></div>
<div class="a sb" style="left:224px;top:681px"><svg width="16" height="16" style="left:-1px;top:-1px"><path d="M6.500 4l4 4-4 4" fill="none" stroke="#4d6185" stroke-width="2"/></svg></div>
<div class="a sb" style="left:132px;top:681px;width:42px"></div>
<div class="a" style="left:150px;top:686px;width:7px;height:6px;background:repeating-linear-gradient(90deg,#eef2fc 0 1px,#8ea6e0 1px 2px)"></div>
<div class="a" style="left:240px;top:681px;width:16px;height:16px;background:#ece9d8"></div>
<div class="a" style="left:260px;top:145px;width:3px;height:554px;background:#fbfbf8"></div>
<div class="a" style="left:267px;top:145px;width:741px;height:554px;background:#fff;border-left:1px solid #716f64;border-top:1px solid #716f64"></div>
<!--MODEL-->
<svg class="a" style="left:0;top:0" width="1024" height="768" viewBox="0 0 1024 768"><defs><clipPath id="vc"><rect x="268" y="146" width="722" height="534"/></clipPath></defs><g clip-path="url(#vc)" shape-rendering="crispEdges">
<polygon points="290.4,409.0 301.4,387.0 309.5,377.0 319.4,367.3 331.4,357.0 342.0,351.0 342.0,446.0 322.0,460.0 305.4,476.9 294.0,492.0 290.4,500.0" fill="#f5f5f5" />
<path d="M290.4 409V505" stroke="#9a9a9a" stroke-width="1" fill="none"/>
<path d="M301.4 387V505" stroke="#9a9a9a" stroke-width="1" fill="none"/>
<path d="M309.5 377V505" stroke="#9a9a9a" stroke-width="1" fill="none"/>
<path d="M319.4 367.3V505" stroke="#9a9a9a" stroke-width="1" fill="none"/>
<path d="M331.4 357V505" stroke="#9a9a9a" stroke-width="1" fill="none"/>
<path d="M290.4,409.0L301.4,387.0L309.5,377.0L319.4,367.3L331.4,357.0L342.0,351.0" stroke="#9a9a9a" stroke-width="1" stroke-dasharray="3 4" fill="none"/>
<path d="M290.4,430.0L301.4,402.5L309.5,393.4L319.4,385.6L331.4,375.0L342.0,369.3" stroke="#9a9a9a" stroke-width="1" stroke-dasharray="3 4" fill="none"/>
<path d="M290.4,452.0L301.4,426.0L309.5,418.0L319.4,410.3L331.4,401.2L342.0,394.7" stroke="#9a9a9a" stroke-width="1" stroke-dasharray="3 4" fill="none"/>
<path d="M290.4,474.0L301.4,450.0L309.5,444.0L319.4,437.7L331.4,428.5L342.0,420.7" stroke="#9a9a9a" stroke-width="1" stroke-dasharray="3 4" fill="none"/>
<path d="M290.4,496.0L301.4,474.0L309.5,468.0L319.4,463.0L331.4,454.0L342.0,446.0" stroke="#9a9a9a" stroke-width="1" stroke-dasharray="3 4" fill="none"/>
<path d="M286 440V500M283 470V496" stroke="#b0b0b0" stroke-width="1" stroke-dasharray="1 3" fill="none"/>
<path d="M342.5 453.1C339.1 455.3 328.2 461.4 322.0 466.5C315.8 471.6 310.1 478.1 305.4 483.4C300.7 488.7 296.9 493.3 294.0 498.5C291.1 503.7 289.1 508.6 287.8 514.5C286.6 520.5 285.2 526.0 286.5 534.2C287.8 542.4 290.7 554.3 295.6 563.5C300.5 572.7 307.6 581.6 316.0 589.5C324.4 597.4 332.8 604.2 346.0 611.0C359.2 617.8 379.3 625.5 395.0 630.5C410.7 635.5 426.0 638.6 440.0 640.8C454.0 643.0 466.0 643.2 479.0 643.7C492.0 644.2 505.0 644.5 518.0 643.7C531.0 642.9 544.0 641.4 557.0 638.8C570.0 636.2 586.2 631.5 596.0 628.1C605.8 624.7 612.5 619.9 615.8 618.3L622 603L345 445Z" fill="#e2e2e2"/>
<path d="M342.5 449.6C339.1 451.8 328.2 457.9 322.0 463.0C315.8 468.1 310.1 474.6 305.4 479.9C300.7 485.2 296.9 489.8 294.0 495.0C291.1 500.2 289.1 505.1 287.8 511.0C286.6 517.0 285.2 522.5 286.5 530.7C287.8 538.9 290.7 550.8 295.6 560.0C300.5 569.2 307.6 578.1 316.0 586.0C324.4 593.9 332.8 600.7 346.0 607.5C359.2 614.3 379.3 622.0 395.0 627.0C410.7 632.0 426.0 635.1 440.0 637.3C454.0 639.5 466.0 639.7 479.0 640.2C492.0 640.7 505.0 641.0 518.0 640.2C531.0 639.4 544.0 637.9 557.0 635.3C570.0 632.7 586.2 628.0 596.0 624.6C605.8 621.2 612.5 616.4 615.8 614.8L622 603L345 445Z" fill="#c4c4c4"/>
<path d="M342.5 446.6C339.1 448.8 328.2 454.9 322.0 460.0C315.8 465.1 310.1 471.6 305.4 476.9C300.7 482.2 296.9 486.8 294.0 492.0C291.1 497.2 289.1 502.1 287.8 508.0C286.6 514.0 285.2 519.5 286.5 527.7C287.8 535.9 290.7 547.8 295.6 557.0C300.5 566.2 307.6 575.1 316.0 583.0C324.4 590.9 332.8 597.7 346.0 604.5C359.2 611.3 379.3 619.0 395.0 624.0C410.7 629.0 426.0 632.1 440.0 634.3C454.0 636.5 466.0 636.7 479.0 637.2C492.0 637.7 505.0 638.0 518.0 637.2C531.0 636.4 544.0 634.9 557.0 632.3C570.0 629.7 586.2 625.0 596.0 621.6C605.8 618.2 612.5 613.4 615.8 611.8L622 603L345 445Z" fill="#8d7568"/>
<path d="M291.700 487V508M303.400 478V508M314 470V508M326 464V508" stroke="#fff" stroke-width="1.600" fill="none"/>
<path d="M299.500 486.600L317 507M305.400 477L333.700 501.300M290 496L296 508" stroke="#fff" stroke-width="1.300" fill="none"/>
<path d="M344.5 449.6C342.6 452.2 335.8 459.9 333.0 465.0C330.2 470.1 329.1 474.7 327.9 480.0C326.6 485.3 325.7 491.5 325.5 497.0C325.3 502.5 325.0 505.1 326.9 513.0C328.8 520.9 330.8 534.7 336.6 544.4C342.5 554.1 351.4 562.6 362.0 571.0C372.6 579.4 387.0 589.0 400.0 595.0C413.0 601.0 426.8 603.4 440.0 607.0C453.2 610.6 466.0 614.5 479.0 616.8C492.0 619.1 505.0 620.4 518.0 620.7C531.0 621.0 544.0 619.9 557.0 618.8C570.0 617.6 586.2 615.4 596.0 613.9C605.8 612.4 611.3 610.9 615.8 610.0C620.3 609.1 621.7 608.8 622.9 608.5L622 603L345 445Z" fill="#dedede"/>
<path d="M344.5 444.6C342.6 447.2 335.8 454.9 333.0 460.0C330.2 465.1 329.1 469.7 327.9 475.0C326.6 480.3 325.7 486.5 325.5 492.0C325.3 497.5 325.0 500.1 326.9 508.0C328.8 515.9 330.8 529.7 336.6 539.4C342.5 549.1 351.4 557.6 362.0 566.0C372.6 574.4 387.0 584.0 400.0 590.0C413.0 596.0 426.8 598.4 440.0 602.0C453.2 605.6 466.0 609.5 479.0 611.8C492.0 614.1 505.0 615.4 518.0 615.7C531.0 616.0 544.0 614.9 557.0 613.8C570.0 612.6 586.2 610.4 596.0 608.9C605.8 607.4 611.3 605.9 615.8 605.0C620.3 604.1 621.7 603.8 622.9 603.5L622 603L345 445Z" fill="#fde0dc" stroke="#e4e4e4" stroke-width="2.500"/>
<path d="M345.4 449.6C347.5 453.7 352.6 465.7 358.0 474.0C363.4 482.3 367.9 489.4 377.7 499.5C387.5 509.6 406.3 526.6 416.7 534.6C427.1 542.6 429.6 541.4 440.0 547.5C450.4 553.6 466.0 564.5 479.0 571.0C492.0 577.5 505.0 582.2 518.0 586.5C531.0 590.8 544.0 593.9 557.0 597.0C570.0 600.1 585.5 603.2 596.0 605.0C606.5 606.8 615.2 607.6 619.7 608.0C624.2 608.4 622.4 607.3 622.9 607.2L622 600L346 444Z" fill="#e6e6e6"/>
<polygon points="622.9,602.2 838.7,477.8 841.0,480.5 622.9,606.0" fill="#6d1111" />
<polygon points="636.8,594.2 654.6,584.0 654.6,588.0 636.8,598.2" fill="#b4b4b4" />
<polygon points="561.0,222.5 566.0,221.0 846.7,383.0 846.7,477.0 838.7,478.0 561.0,318.0" fill="#d4743b" />
<path d="M345.4 444.6C347.5 448.7 352.6 460.7 358.0 469.0C363.4 477.3 367.9 484.4 377.7 494.5C387.5 504.6 406.3 521.6 416.7 529.6C427.1 537.6 429.6 536.4 440.0 542.5C450.4 548.6 466.0 559.5 479.0 566.0C492.0 572.5 505.0 577.2 518.0 581.5C531.0 585.8 544.0 588.9 557.0 592.0C570.0 595.1 585.5 598.2 596.0 600.0C606.5 601.8 615.2 602.6 619.7 603.0C624.2 603.4 622.4 602.3 622.9 602.2L838.700 477.800L763.400 433L763.400 405L561 317.700L346.400 444.300Z" fill="#cb8672"/>
<polygon points="344.0,349.5 561.0,224.0 561.0,317.7 346.4,444.3 344.0,446.0" fill="#8a4926" />
<polygon points="342.5,347.5 565.9,218.2 565.9,223.0 346.4,350.0 346.4,444.3 342.5,446.5" fill="#a3a3a3" />
<polygon points="565.9,218.2 846.7,380.5 846.7,385.0 561.0,223.5" fill="#a3a3a3" />
<polygon points="408.8,337.5 413.0,332.2 417.2,330.0 420.8,329.0 420.8,388.7 408.8,395.8" fill="#ffffff" />
<polygon points="420.8,329.0 425.4,330.0 425.4,388.5 420.8,391.2" fill="#a3a3a3" />
<polygon points="408.8,395.3 425.4,385.5 425.4,388.5 408.8,398.3" fill="#a3a3a3" />
<polygon points="466.7,304.0 471.0,298.7 475.3,296.4 479.0,295.4 479.0,357.5 466.7,363.5" fill="#8a4926" />
<polygon points="466.7,304.0 471.0,298.7 475.3,296.4 479.0,295.4 479.0,312.5 466.7,318.8" fill="#ffffff" />
<polygon points="466.7,318.8 479.0,312.5 479.0,315.5 466.7,321.8" fill="#c8733f" />
<polygon points="479.0,295.4 483.3,296.4 483.3,355.0 479.0,357.5" fill="#a3a3a3" />
<polygon points="466.7,360.5 483.3,352.0 483.3,355.0 466.7,363.5" fill="#a3a3a3" />
<polygon points="524.6,270.8 529.1,265.3 533.6,263.1 537.5,262.0 537.5,324.5 524.6,330.2" fill="#8a4926" />
<polygon points="524.6,270.8 529.1,265.3 533.6,263.1 537.5,262.0 537.5,279.0 524.6,284.4" fill="#ffffff" />
<polygon points="524.6,284.4 537.5,279.0 537.5,282.0 524.6,287.4" fill="#c8733f" />
<polygon points="537.5,262.0 542.0,263.0 542.0,321.9 537.5,324.5" fill="#a3a3a3" />
<polygon points="524.6,327.2 542.0,318.9 542.0,321.9 524.6,330.2" fill="#a3a3a3" />
<path d="M470.500 300.500l8.500 4M469 304.500l10 4.500" stroke="#111" stroke-width="1" fill="none"/>
<path d="M524.800 281l5 2.500" stroke="#111" stroke-width="1" fill="none"/>
<polygon points="360.0,413.0 377.0,407.0 377.0,426.7 360.0,435.5" fill="#a3a3a3" />
<polygon points="361.5,414.5 367.0,412.3 367.0,429.0 361.5,432.0" fill="#ffffff" />
<polygon points="368.5,411.8 373.5,410.0 373.5,425.5 368.5,428.2" fill="#ffffff" />
<polygon points="762.5,385.5 805.6,362.0 805.6,397.0 822.0,416.0 822.0,422.0 846.7,422.0 846.7,476.5 838.7,477.8 763.4,433.0 763.4,400.0" fill="#6d1111" />
<polygon points="805.6,362.5 845.5,381.5 822.0,415.6 816.5,398.0 805.6,404.0" fill="#d4743b" />
<polygon points="845.5,381.5 846.7,382.0 846.7,422.0 822.0,422.0 822.0,415.6" fill="#6d1111" />
<polygon points="823.8,421.5 843.2,421.5 843.2,476.5 836.7,476.5" fill="#d4743b" />
<polygon points="576.6,324.0 602.0,309.0 620.5,318.7 596.0,335.7" fill="#10213f" />
<polygon points="596.0,335.7 620.5,318.7 635.0,311.0 666.4,311.0 774.0,374.6 760.0,385.8 735.8,385.5 628.4,324.5 618.6,349.0" fill="#d2d2d2" />
<polygon points="628.4,324.5 735.8,385.5 681.0,385.5 618.6,349.0" fill="#10213f" />
<polygon points="681.0,384.5 766.0,385.8 800.4,388.0 726.0,412.5" fill="#7a6046" />
<path d="M407.0 458.5C407.5 460.6 408.2 466.9 410.0 471.0C411.8 475.1 414.7 479.0 418.0 483.0C421.3 487.0 426.1 491.0 430.0 495.0C433.9 499.0 439.4 505.0 441.3 507.0" fill="none" stroke="#10213f" stroke-width="1"/>
<path d="M441.3 401.5C439.0 402.8 431.4 406.1 427.2 409.3C423.1 412.6 419.3 416.7 416.3 421.0C413.3 425.3 410.9 430.6 409.3 435.0C407.8 439.4 407.4 443.7 407.0 447.6C406.6 451.5 407.0 456.7 407.0 458.5L433.500 470.200L441.300 507L446 508L562 521.600L618.600 515.700L624.500 513.750L613.700 411.800L560 411L520 380L450 390Z" fill="#10213f"/>
<polygon points="544.5,342.5 484.0,377.7 512.3,378.6 530.0,370.0" fill="#10213f" />
<polygon points="484.0,377.7 512.3,378.6 500.6,390.5 496.0,389.0" fill="#7a6046" />
<polygon points="460.5,438.6 521.0,466.0 587.5,508.0 446.0,508.0 441.3,507.0 433.5,470.2" fill="#cb8672" />
<polygon points="407.0,458.5 427.2,458.5 429.6,455.4 467.9,442.9 489.8,454.6 433.5,470.2 410.0,471.0" fill="#d2d2d2" />
<polygon points="460.0,439.8 470.2,442.9 453.8,447.6" fill="#cb8672" />
<polygon points="407.0,458.5 410.0,471.0 418.0,483.0 424.5,490.5 429.0,483.0 421.0,472.6 412.0,470.0" fill="#d2d2d2" />
<polygon points="421.0,472.6 432.7,471.0 435.0,481.2 428.0,482.7" fill="#10213f" />
<polygon points="496.8,462.4 438.2,491.3 424.0,489.8 433.5,481.2" fill="#d2d2d2" />
<polygon points="433.5,492.0 439.0,492.0 441.8,507.0" fill="#10213f" />
<path d="M409 462l6 8M412 474l8 9M418 484l9 8" stroke="#10213f" stroke-width="1" fill="none"/>
<polygon points="566.0,319.0 726.0,412.5 746.9,421.8 678.0,461.0 613.7,411.8 592.4,411.2 482.0,410.9 544.5,342.5" fill="#cb8672" />
<polygon points="424.4,347.4 500.6,393.3 482.0,410.9 443.0,411.8 442.0,402.0" fill="#d9783d" />
<polygon points="484.0,411.2 592.4,411.2 571.9,461.0" fill="#d2d2d2" />
<polygon points="592.4,411.2 613.7,411.8 624.5,513.8 589.3,420.0 573.7,461.0" fill="#10213f" />
<polygon points="592.4,411.2 589.3,420.0 571.9,461.0 573.7,461.0 600.0,440.0" fill="#10213f" />
<polygon points="573.7,461.0 678.0,461.0 801.0,390.4 800.4,388.5" fill="#d2d2d2" />
<polygon points="638.0,522.5 705.5,467.9 732.9,467.9" fill="#d2d2d2" />
<path d="M517 468L525 465M533.800 464.400L635.200 523.500" stroke="#fff" stroke-width="1.200" fill="none"/>
<path d="M727 459L762.500 440" stroke="#222" stroke-width="1" stroke-dasharray="2 1" fill="none"/>
<path d="M778 439l14-7.500" stroke="#eee" stroke-width="1" stroke-dasharray="1 1" fill="none"/>
<polygon points="758.8,384.6 805.6,361.0 805.6,364.3 765.2,386.0" fill="#a3a3a3" />
<polygon points="763.4,423.9 816.2,394.5 817.0,398.0 763.4,428.0" fill="#a3a3a3" />
<polygon points="763.4,428.0 817.0,398.0 820.9,415.6 822.0,422.0 819.0,422.0 819.0,466.0 763.4,433.0" fill="#6d1111" />
<polygon points="763.4,412.0 774.0,407.4 781.0,411.5 763.4,422.7" fill="#10213f" />
<polygon points="747.0,422.7 763.4,414.0 763.4,433.0 756.0,428.5" fill="#b9b9b9" />
<polygon points="802.0,431.0 813.9,423.3 813.9,462.5 802.0,455.5" fill="#d4743b" />
<polygon points="797.8,428.5 802.0,428.5 802.0,456.0 797.8,453.5" fill="#fbd191" />
<polygon points="813.9,419.0 818.8,419.0 818.8,465.5 813.9,462.8" fill="#fbd191" />
<polygon points="700.0,474.5 707.8,467.7 732.0,467.7 715.6,480.0" fill="#d2d2d2" />
<path d="M778 439l14-7.500" stroke="#eee" stroke-width="1" stroke-dasharray="1 1" fill="none"/>
</g></svg>
<svg class="a" style="left:0;top:0" width="1024" height="768" viewBox="0 0 1024 768" font-family="Liberation Sans,sans-serif">
<defs><radialGradient id="cs" cx="50%" cy="50%" r="50%"><stop offset="0" stop-color="#9a9a9a" stop-opacity=".55"/><stop offset=".6" stop-color="#b0b0b0" stop-opacity=".25"/><stop offset="1" stop-color="#fff" stop-opacity="0"/></radialGradient></defs>
<path d="M840 266a60 37 0 1 0 120 0a60 37 0 1 0-120 0zM852 265.800a47.600 24.200 0 1 1 95.200 0a47.600 24.200 0 1 1-95.200 0z" fill="#e6e9ee" fill-rule="evenodd"/>
<ellipse cx="899.600" cy="265.800" rx="47.600" ry="24.200" fill="none" stroke="#c2c7d0" stroke-width="2.200"/>
<ellipse cx="902" cy="268" rx="38" ry="19" fill="url(#cs)"/>
<text transform="matrix(.85 .5 -.8 .55 854.7 236.7)" font-size="16" font-weight="bold" fill="#9fa5ae" stroke="#9fa5ae" stroke-width=".7" text-anchor="middle">W</text>
<text transform="matrix(.85 .5 -.8 .55 935.1 237.4)" font-size="16" font-weight="bold" fill="#9fa5ae" stroke="#9fa5ae" stroke-width=".7" text-anchor="middle">N</text>
<text transform="matrix(.85 .5 -.8 .55 849.1 288.2)" font-size="16" font-weight="bold" fill="#9fa5ae" stroke="#9fa5ae" stroke-width=".7" text-anchor="middle">S</text>
<text transform="matrix(.85 .5 -.8 .55 941.3 290.6)" font-size="16" font-weight="bold" fill="#9fa5ae" stroke="#9fa5ae" stroke-width=".7" text-anchor="middle">E</text>
<polygon points="899.500,198.600 865.200,216.600 900.300,235.300 934.400,215.800" fill="#f1f2f5" stroke="#8a9098" stroke-width=".7"/>
<polygon points="865.200,216.600 900.300,235.300 900.300,276 867.500,254.800" fill="#e6e8ec" stroke="#8a9098" stroke-width=".7"/>
<polygon points="900.300,235.300 934.400,215.800 932.300,254.800 900.300,276" fill="#dee0e5" stroke="#8a9098" stroke-width=".7"/>
<text transform="matrix(.88 .47 .03 1 870.500 243)" font-size="8.500" font-weight="bold" fill="#9aa0aa" letter-spacing="-.2">FRONT</text>
<text transform="matrix(.87 -.5 -.03 1 906.500 256)" font-size="8.500" font-weight="bold" fill="#9aa0aa" letter-spacing="-.2">RIGHT</text>
<text transform="matrix(.88 .47 -.87 .5 894 213)" font-size="8.500" font-weight="bold" fill="#9aa0aa" letter-spacing="-.2">TOP</text>
</svg>

<svg class="a" style="left:0;top:0" width="1024" height="768" viewBox="0 0 1024 768" font-family="Liberation Sans,sans-serif" font-size="10" font-weight="bold" fill="#6a6460" text-anchor="middle">
<path d="M332 554.600H384.500a8 8 0 0 1 8 8V668.700a8 8 0 0 1-8 8H332z" fill="#d8d8d8" fill-opacity=".22"/><path d="M320 554.600H384.500a8 8 0 0 1 8 8V668.700a8 8 0 0 1-8 8H320" fill="none" stroke="#a8a4a0" stroke-opacity=".8" stroke-width="1"/>
<circle cx="331.500" cy="615.800" r="62.800" fill="#c8c8c8" fill-opacity=".3" stroke="#8c8884" stroke-opacity=".85" stroke-width="1.200"/>
<circle cx="331.500" cy="615.800" r="38.600" fill="#fff" fill-opacity=".18" stroke="#8c8884" stroke-opacity=".85" stroke-width="1.200"/>
<path d="M292.900 615.800h77.200M331.500 577.200v77.200M304.200 588.500l-17.250-17.250M358.800 588.500l17.250-17.250M304.200 643.100l-17.250 17.250M358.800 643.100l17.250 17.250" stroke="#8c8884" stroke-opacity=".85" stroke-width="1.100" fill="none"/>
<text x="332" y="570">ZOOM</text>
<text x="332" y="670" fill="#8a8a8a">PAN</text>
<text transform="translate(286.500,616) rotate(-90)" fill="#8a8a8a">ORBIT</text>
<text transform="translate(377.500,616) rotate(90)">REWIND</text>
<g font-size="7.500">
<text transform="translate(316.500,599.500) rotate(-45)">CENTER</text>
<text transform="translate(349,597.500) rotate(40)">WALK</text>
<text transform="translate(310,630) rotate(50)" fill="#7a7a7a">LOOK</text>
<text transform="translate(353,634.500) rotate(-50)" fill="#7a7a7a">UP/DOWN</text>
</g>
<path d="M380 562l6 6M386 562l-6 6" stroke="#a0a0a0" stroke-width="1.200" fill="none"/>
<circle cx="383" cy="667" r="5" fill="#fff" fill-opacity=".6" stroke="#a8a8a8"/>
<path d="M380.500 665.500h5l-2.500 3z" fill="#909090"/>
</svg>

<div class="a" style="left:990px;top:146px;width:18px;height:535px;background:linear-gradient(90deg,#f0efe8,#fbfbf8 40%,#fdfdfb)"></div>
<div class="a sb" style="left:991px;top:147px"><svg width="16" height="16" style="left:-1px;top:-1px"><path d="M4 9.500l4-4 4 4" fill="none" stroke="#4d6185" stroke-width="2"/></svg></div>
<div class="a sb" style="left:991px;top:664px"><svg width="16" height="16" style="left:-1px;top:-1px"><path d="M4 6.500l4 4 4-4" fill="none" stroke="#4d6185" stroke-width="2"/></svg></div>
<div class="a sb" style="left:991px;top:406px;height:16px"></div>
<div class="a" style="left:995px;top:410px;width:7px;height:7px;background:repeating-linear-gradient(#eef2fc 0 1px,#8ea6e0 1px 2px)"></div>
<div class="a" style="left:268px;top:680px;width:740px;height:18px;background:#ece9d8"></div>
<div class="a" style="left:268px;top:698px;width:740px;height:1px;background:#fff"></div>
<div class="a" style="left:513px;top:680px;width:477px;height:18px;background:linear-gradient(#f0efe8,#fbfbf8 40%,#fdfdfb)"></div>
<div class="a sb" style="left:514px;top:681px"><svg width="16" height="16" style="left:-1px;top:-1px"><path d="M9.500 4l-4 4 4 4" fill="none" stroke="#4d6185" stroke-width="2"/></svg></div>
<div class="a sb" style="left:974px;top:681px"><svg width="16" height="16" style="left:-1px;top:-1px"><path d="M6.500 4l4 4-4 4" fill="none" stroke="#4d6185" stroke-width="2"/></svg></div>
<div class="a sb" style="left:744px;top:681px;width:16px"></div>
<div class="a" style="left:748px;top:685px;width:7px;height:7px;background:repeating-linear-gradient(90deg,#eef2fc 0 1px,#8ea6e0 1px 2px)"></div>
<svg style="left:993px;top:685px" width="12" height="12" fill="#b8b4a4"><rect x="8" y="0" width="2" height="2"/><rect x="4" y="4" width="2" height="2"/><rect x="8" y="4" width="2" height="2"/><rect x="0" y="8" width="2" height="2"/><rect x="4" y="8" width="2" height="2"/><rect x="8" y="8" width="2" height="2"/></svg>
<span class="t" style="left:279px;top:683px;letter-spacing:.3px">1/8" = 1'-0"</span>
<svg style="left:351px;top:682px" width="13" height="13"><rect x=".5" y=".5" width="11" height="11" fill="#fff" stroke="#000"/><path d="M2 2h2v2h-2zM6 2h2v2h-2zM4 4h2v2h-2zM8 4h2v2h-2zM2 6h2v2h-2zM6 6h2v2h-2zM4 8h2v2h-2zM8 8h2v2h-2z" fill="#000"/></svg>
<svg style="left:369px;top:681px" width="17" height="14"><path d="M1 5l9-4 6 3v5l-9 4-6-3z" fill="#a8d0f0" stroke="#5080b0"/><path d="M1 5l6 3 9-4M7 8v5" fill="none" stroke="#5080b0"/><path d="M1.500 5.200l8.500-3.700 5.500 2.700-8.500 3.500z" fill="#d0e8fa"/></svg>
<svg style="left:390px;top:681px" width="14" height="14"><path d="M2 11l2-8q3-3 8-1l-3 8z" fill="#fff" stroke="#707070"/><path d="M3 12.500h10" stroke="#b0b0b0" stroke-width="2"/></svg>
<svg style="left:409px;top:680px" width="18" height="15"><path d="M4 6q0 7 5 7.500q5-.5 5-7.500z" fill="#fff" stroke="#000"/><path d="M3 6h12M9 3.500v2.500M7.500 3h3" stroke="#000" fill="none"/><path d="M4 8q-3-3-3.500-5M14 8q3 0 3-2.500t-3-.5" stroke="#000" fill="none"/></svg>
<svg style="left:432px;top:681px" width="15" height="15" fill="none"><path d="M3.500 0v11.500h11.500M0 3.500h11.500v11.500" stroke="#1020c0" stroke-width="1.800"/><path d="M1 13l12-11" stroke="#d02020" stroke-width="1.300"/></svg>
<svg style="left:453px;top:681px" width="15" height="15" fill="none"><path d="M3.500 3v8.500h11.500M0 6.500h11.500v8.500" stroke="#1020c0" stroke-width="1.800"/><circle cx="11" cy="2.500" r="2" fill="#c8c8c8" stroke="#707070"/><path d="M11 4.500v2" stroke="#707070"/></svg>
<svg style="left:472px;top:682px" width="18" height="13" fill="none" stroke="#000"><circle cx="5" cy="8" r="3"/><circle cx="13" cy="6" r="3"/><path d="M8 7.500q1-1 2-.5M2 6l-1.500-4M15.500 4l1.500-3"/></svg>
<svg style="left:495px;top:680px" width="12" height="16"><path d="M5.500 1q-4.500 0-4.500 4 0 2 2.500 4.500v2h4v-2q2.500-2.500 2.500-4.500 0-4-4.500-4z" fill="#f8f8f0" stroke="#606060"/><path d="M3.500 12.500h4M4 14.500h3" stroke="#606060"/></svg>
<span class="t" style="left:5px;top:704px;letter-spacing:-.1px">Click to select, TAB for alternates, CTRL adds, SHIFT unselects.</span>
<div class="a vs" style="left:775px;top:702px;height:15px"></div>
<div class="a vs" style="left:805px;top:702px;height:15px"></div>
<div class="a vs" style="left:834px;top:702px;height:15px"></div>
<div class="a vs" style="left:866px;top:702px;height:15px"></div>
<div class="a vs" style="left:961px;top:702px;height:15px"></div>
<span class="t" style="left:808px;top:704px;letter-spacing:-.8px">NUM</span>
<svg style="left:871px;top:702px" width="15" height="15"><path d="M1 1h12l-4.500 6v6h-3v-6z" fill="#7a9ad8" stroke="#2a4a90"/></svg>
<span class="t" style="left:887px;top:704px">:0</span>
<svg style="left:966px;top:701px" width="17" height="16"><ellipse cx="9" cy="5.500" rx="5.500" ry="4.500" fill="#8a9ec8" stroke="#4a5a80"/><path d="M5 2l7 7" stroke="#4a5a80"/><path d="M9 10v3M4 14.500h10" stroke="#4a5a80" stroke-width="1.600"/></svg>
<svg style="left:994px;top:705px" width="12" height="12" fill="#b8b4a4"><rect x="8" y="0" width="2" height="2"/><rect x="4" y="4" width="2" height="2"/><rect x="8" y="4" width="2" height="2"/><rect x="0" y="8" width="2" height="2"/><rect x="4" y="8" width="2" height="2"/><rect x="8" y="8" width="2" height="2"/></svg>

</div>
<!-- IE status bar behind -->
<div class="a" style="left:0;top:723px;width:1024px;height:15px;background:#ece9d8;border-top:1px solid #f8f7f2"></div>
<div class="a" style="left:625px;top:723px;width:147px;height:13px;background:repeating-linear-gradient(90deg,#c8c4b4 0 1px,#fff 1px 2px,transparent 2px 24px)"></div>
<svg style="left:775px;top:721px" width="16" height="16"><circle cx="8" cy="8" r="7" fill="#2a6ac8"/><path d="M3 5q3-3 6-1 1 3-2 5-1 3-3 1-2-3-1-5zM10 9q3-1 4 1-1 3-3 3z" fill="#48b048"/></svg>
<span class="t" style="left:794px;top:722px;font-size:12px;letter-spacing:-.3px">Internet</span>
<div class="a vs" style="left:923px;top:724px;height:13px"></div>
<svg style="left:936px;top:721px" width="14" height="14"><circle cx="5" cy="5" r="3.500" fill="#d8e8f8" stroke="#4a6aa8" stroke-width="1.500"/><path d="M8 8l4 4" stroke="#a06030" stroke-width="2"/><path d="M3 5h4M5 3v4" stroke="#2a4a90"/></svg>
<span class="t" style="left:951px;top:722px;font-size:12px;letter-spacing:-.3px">100%</span>
<svg style="left:994px;top:727px" width="7" height="4"><path d="M0 0h6l-3 3.500z" fill="#000"/></svg>
<svg style="left:1012px;top:725px" width="12" height="12" fill="#b8b4a4"><rect x="8" y="0" width="2" height="2"/><rect x="4" y="4" width="2" height="2"/><rect x="8" y="4" width="2" height="2"/><rect x="0" y="8" width="2" height="2"/><rect x="4" y="8" width="2" height="2"/><rect x="8" y="8" width="2" height="2"/></svg>
<!-- taskbar -->
<div class="a" style="left:0;top:737px;width:1024px;height:1px;background:#f6f5f0"></div>
<div class="a" style="left:0;top:738px;width:1024px;height:30px;background:linear-gradient(#1f50b8 0,#3a88e8 3%,#4090e8 10%,#2a62d8 16%,#2456d4 25%,#245cdc 40%,#2662e0 85%,#2458d0 93%,#1a3ea8 100%)"></div>
<div class="a" style="left:0;top:738px;width:98px;height:30px;border-radius:0 12px 12px 0;background:linear-gradient(#2f7a2f 0,#5cb85c 8%,#3e9c3e 20%,#379637 60%,#2d7e2d 100%);box-shadow:2px 0 3px rgba(0,0,40,.5)"></div>
<svg style="left:11px;top:744px" width="20" height="18"><path d="M1 3q3-2 7 0l-1.500 6q-4-2-7 0z" fill="#e85a28"/><path d="M9.500 3q3 2 7 0l-1.500 6q-4 2-7 0z" fill="#6ac040"/><path d="M-.5 10q3-2 7 0l-1.500 6q-4-2-7 0z" fill="#3a78e8"/><path d="M8 10q3 2 7 0l-1.500 6q-4 2-7 0z" fill="#f0c030"/></svg>
<span class="t" style="left:34px;top:742px;color:#fff;font-size:18px;font-weight:bold;font-style:italic;line-height:22px;letter-spacing:-.3px;text-shadow:1px 1px 1px #1a4a1a">start</span>
<div class="a tb" style="left:107px"><span>RevitCity.com | Foru...</span></div>
<div class="a tb" style="left:267px"><span>::: eBuddy Web Mess...</span></div>
<div class="a tb act" style="left:427px"><span>Revit Architecture 20...</span></div>
<svg style="left:114px;top:743px" width="20" height="20"><text x="4" y="16" font-size="18" font-weight="bold" fill="#30a8f0" stroke="#1a4aa8" stroke-width=".7" font-family="Liberation Sans,sans-serif">e</text><path d="M2.500 16q-1.500-5 5-10.500 5-4 9-2.500" fill="none" stroke="#c08030" stroke-width="2.600"/><path d="M2.500 16q-1.500-5 5-10.500 5-4 9-2.500" fill="none" stroke="#f4d040" stroke-width="1.400"/></svg>
<svg style="left:274px;top:743px" width="20" height="20"><text x="4" y="16" font-size="18" font-weight="bold" fill="#30a8f0" stroke="#1a4aa8" stroke-width=".7" font-family="Liberation Sans,sans-serif">e</text><path d="M2.500 16q-1.500-5 5-10.500 5-4 9-2.500" fill="none" stroke="#c08030" stroke-width="2.600"/><path d="M2.500 16q-1.500-5 5-10.500 5-4 9-2.500" fill="none" stroke="#f4d040" stroke-width="1.400"/></svg>
<svg style="left:436px;top:746px" width="16" height="16" viewBox="0 0 16 16"><rect x="0" y="2" width="16" height="14" fill="#f4f0e8"/><path d="M3 0v10M3 1h4q2 0 2 2t-2 2H3M6 5l4 4" stroke="#b03a90" stroke-width="2.200" fill="none"/><path d="M10 15l2.500-6 2.500 6M11 13h3" stroke="#111" stroke-width="1.500" fill="none"/></svg>
<div class="a" style="left:949px;top:738px;width:75px;height:30px;background:linear-gradient(#0c5cc8 0,#1a9af0 8%,#1290e8 20%,#0f8ae6 70%,#0a70c8 100%);border-left:1px solid #0a3a90"></div>
<div class="a" style="left:940px;top:744px;width:18px;height:18px;border-radius:9px;background:radial-gradient(circle at 40% 35%,#5ab0ff,#1a6ae0 70%);border:1px solid #9cc8ff"></div>
<svg style="left:945px;top:749px" width="8" height="9"><path d="M6 1l-4 3.500 4 3.500" fill="none" stroke="#fff" stroke-width="2"/></svg>
<span class="t" style="left:968px;top:747px;color:#fff;font-size:11px;letter-spacing:-.3px">7:03 PM</span>

</body></html>
